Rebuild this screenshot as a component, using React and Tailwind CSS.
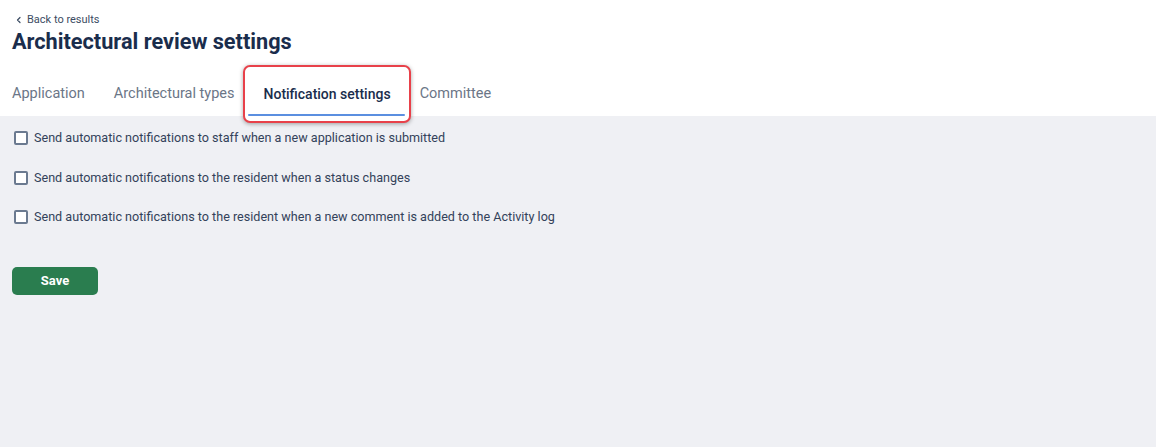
import React from "react";

const font = { fontFamily: "Roboto, 'Noto Sans', sans-serif" };

function Checkbox() {
  return (
    <span className="inline-block w-[14px] h-[14px] rounded-[2px] border-2 border-[#6b7a90] bg-white shrink-0" />
  );
}

export default function App() {
  const tabs = ["Application", "Architectural types", "Notification settings", "Committee"];
  const rows = [
    "Send automatic notifications to staff when a new application is submitted",
    "Send automatic notifications to the resident when a status changes",
    "Send automatic notifications to the resident when a new comment is added to the Activity log",
  ];
  return (
    <div className="w-[1156px] h-[447px] flex flex-col bg-white overflow-hidden" style={font}>
      <div className="bg-white pl-3 pt-[13px]">
        <div className="flex items-center gap-[4px] pl-[3px] text-[11px] text-[#3c4c63] leading-[14px]">
          <svg width="8" height="8" viewBox="0 0 8 8" fill="none">
            <path d="M5 1.5 L2.5 4 L5 6.5" stroke="#3c4c63" strokeWidth="1.2" strokeLinecap="round" strokeLinejoin="round" />
          </svg>
          <span>Back to results</span>
        </div>
        <h1 className="text-[21.7px] font-bold text-[#1a2d4c] leading-[26px] mt-[2px]">Architectural review settings</h1>
        <div className="flex ml-[-14.5px] mt-[29px]">
          {tabs.map((t, i) => {
            const active = i === 2;
            return (
              <div key={t} className="relative px-[14.5px]">
                {active && (
                  <div className="absolute left-[-6px] right-[-6px] top-[-19px] bottom-[-7px] rounded-[7px] border-2 border-[#e8414a] bg-white shadow-[0_1px_4px_rgba(0,0,0,0.35)]" />
                )}
                <div
                  className={
                    "relative leading-[20px] pb-[10px] " +
                    (active ? "font-medium text-[#1a2d4c] text-[14px]" : "text-[#6b7687] text-[14.5px]")
                  }
                >
                  {t}
                </div>
                {active && <div className="relative h-[2px] bg-[#5b8fe0] rounded-full ml-[-16px] mr-[-14px]" />}
              </div>
            );
          })}
        </div>
      </div>
      <div className="flex-1 bg-[#eff0f4] pl-[14px] pt-[14px]">
        <div className="flex flex-col gap-[23.5px]">
          {rows.map((r) => (
            <div key={r} className="flex items-center gap-[6px] h-[16px]">
              <Checkbox />
              <span className="text-[12.6px] text-[#33425a] leading-[16px]">{r}</span>
            </div>
          ))}
        </div>
        <button className="mt-[42px] ml-[-2px] w-[86px] h-[28px] rounded-[5px] bg-[#2a7d4f] text-white text-[13px] font-bold flex items-center justify-center">
          Save
        </button>
      </div>
    </div>
  );
}
